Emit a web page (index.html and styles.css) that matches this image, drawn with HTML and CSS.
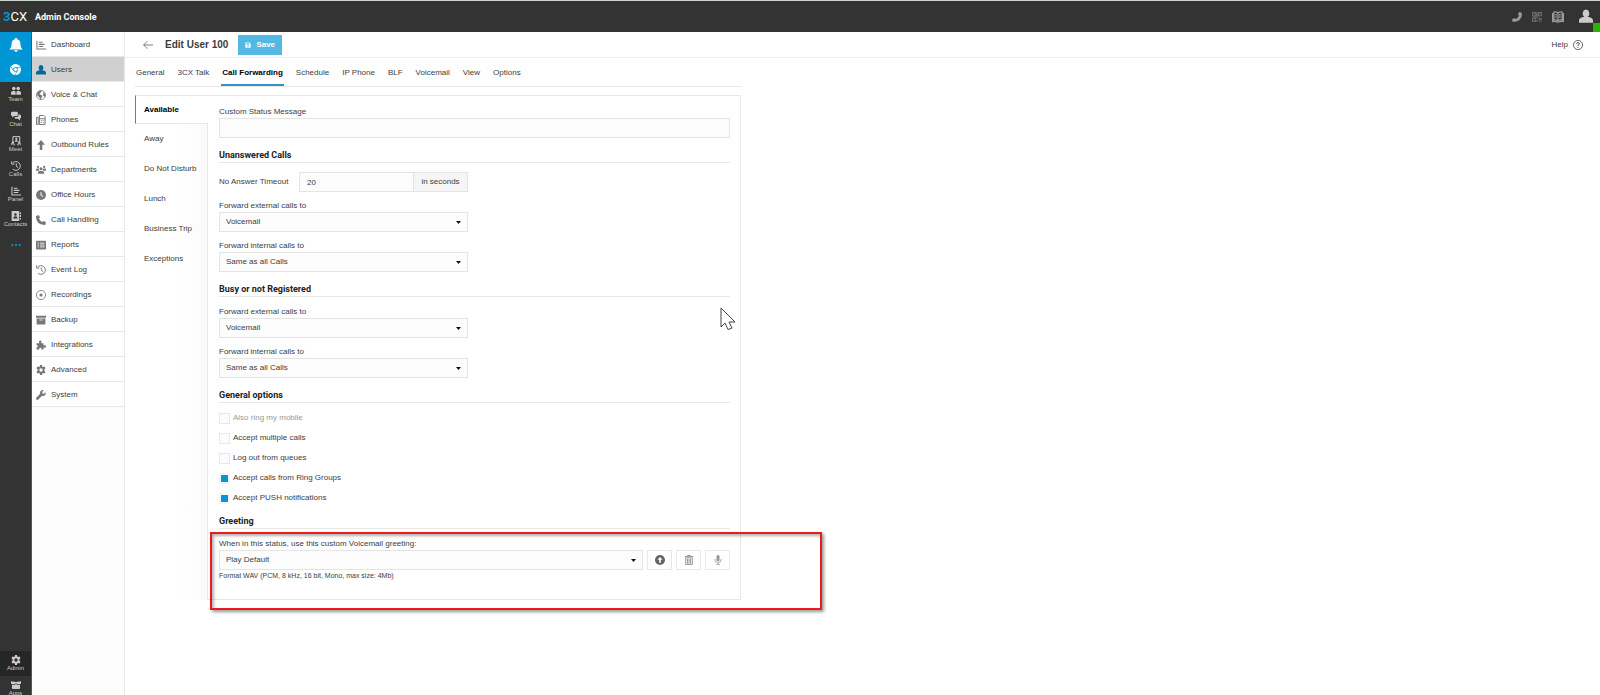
FILE: index.html
```html
<!DOCTYPE html>
<html lang="en">

<head>
    <meta charset="UTF-8">
    <meta name="viewport" content="width=device-width, initial-scale=1.0">
    <title>3CX Admin Console</title>
    <link rel="stylesheet" href="styles.css">
</head>

<body>
    <svg class="sprite" aria-hidden="true">
        <symbol id="i-chart" viewBox="0 0 16 16"><path d="M1.5 1v13.500H16M4.500 3.500h6M4.500 7h9M4.500 10.500h7" fill="none" stroke="currentColor" stroke-width="1.700"/></symbol>
        <symbol id="i-user" viewBox="0 0 16 16"><path d="M8 0a4 4.500 0 0 1 2 8.300c3 .7 6 1.500 6 4.200V15H0v-2.500c0-2.700 3-3.500 6-4.200A4 4.500 0 0 1 8 0z"/></symbol>
        <symbol id="i-globe" viewBox="0 0 16 16"><circle cx="8" cy="8" r="7.300" fill="none" stroke="currentColor" stroke-width="1.300"/><path d="M2 4l4-3 3 1-1 2-2 1v2l3 1 1 2-2 4-1 1-2-4-3-2zM11 3l3 2 1 4-2 2-2-3 1-2z"/></symbol>
        <symbol id="i-fax" viewBox="0 0 16 16"><path d="M.7 3.700h2.800v11.600H.7zM5.500 15.300V.7h7l2 2v12.600zM5.500 6h9M7.700 9h1.500M10.800 9h1.500M7.700 12h1.500M10.800 12h1.500" fill="none" stroke="currentColor" stroke-width="1.600"/></symbol>
        <symbol id="i-up" viewBox="0 0 16 16"><path d="M8 0l6.500 7.500H10V16H6V7.500H1.500z"/></symbol>
        <symbol id="i-group" viewBox="0 0 16 16"><circle cx="3" cy="3" r="1.800"/><circle cx="13" cy="3" r="1.800"/><circle cx="8" cy="6" r="2.400"/><path d="M0 9V7.500Q0 5.700 2 5.700h2.500L5 9zM16 9V7.500q0-1.800-2-1.800h-2.500L11 9zM3 14v-2q0-2.500 2.500-2.500h5Q13 9.500 13 12v2z"/></symbol>
        <symbol id="i-clock" viewBox="0 0 16 16"><circle cx="8" cy="8" r="8"/><path d="M8 3.500V8.500l3.500 2" fill="none" stroke="#fff" stroke-width="1.600"/></symbol>
        <symbol id="i-phone" viewBox="0 0 16 16"><path d="M1 1l3.500-1L6.500 4 4.700 5.700q1.700 4 5.600 5.600L12 9.500l4 2-1 3.500q-.3 1-1.500 1Q0 15 0 2.500 0 1.300 1 1z"/></symbol>
        <symbol id="i-list" viewBox="0 0 16 16"><rect y="1" width="16" height="14" rx="1.500"/><path d="M2.500 5h2M6.500 5h7M2.500 8h2M6.500 8h7M2.500 11h2M6.500 11h7" stroke="#fff" stroke-width="1.300"/></symbol>
        <symbol id="i-history" viewBox="0 0 16 16"><path d="M2.500 3.500A7 7 0 1 1 3 13M1 .5v4.500h4.500M8.500 4v4.500l3 2" fill="none" stroke="currentColor" stroke-width="1.500"/></symbol>
        <symbol id="i-record" viewBox="0 0 16 16"><circle cx="8" cy="8" r="7.300" fill="none" stroke="currentColor" stroke-width="1.300"/><circle cx="8" cy="8" r="2.500"/></symbol>
        <symbol id="i-box" viewBox="0 0 16 16"><path d="M0 1h16v3.500H0zM1 5.500h14V15H1z"/><path d="M5.500 8h5" stroke="#fff" stroke-width="1.300"/></symbol>
        <symbol id="i-puzzle" viewBox="0 0 16 16"><path d="M1 5h4.500Q4 3 5.200 1.500q1.500-1.300 3.200 0Q9.500 3 8 5h4v4q2-1.500 3.500-.3 1 1.600 0 3.200Q14 13 12 11.500V15H8.500q1-2.500-1.500-2.800Q4.500 12.500 5.500 15H1v-4q2 1 2.300-1Q3 8 1 9z"/></symbol>
        <symbol id="i-gear" viewBox="0 0 16 16"><path d="M6.500 0h3l.5 2.300 1.500.8 2.200-.8 1.500 2.700L13.500 6.700v2.600l1.700 1.700-1.500 2.700-2.200-.8-1.500.8-.5 2.300h-3L6 13.700l-1.500-.8-2.200.8L.8 11l1.700-1.700V6.700L.8 5l1.500-2.700 2.200.8L6 2.300zM8 5.300a2.700 2.700 0 1 0 0 5.400 2.700 2.700 0 0 0 0-5.400z" fill-rule="evenodd"/></symbol>
        <symbol id="i-wrench" viewBox="0 0 16 16"><path d="M15.500 3.500L13 6l-2.500-.5L10 3l2.500-2.500Q9.500-.5 7.500 1.700 6 3.500 6.700 6L.7 12q-1.200 1.500 0 3t3 .2L9.800 9.300q2.700.7 4.500-1 2-2 1.200-4.800z"/></symbol>
        <symbol id="i-bell" viewBox="0 0 16 16"><path d="M7 0h2v1.500q4 .7 4 5 0 4.500 2.500 6.500H.5Q3 11 3 6.500q0-4.300 4-5zM6 14h4q-.3 2-2 2t-2-2z"/></symbol>
        <symbol id="i-chrome" viewBox="0 0 16 16"><circle cx="8" cy="8" r="8"/><path d="M1.500 4L5 10M15 5.200H8M10.500 10L7.500 15.500" stroke="#0096d6" stroke-width="1"/><circle cx="8" cy="8" r="3" stroke="#0096d6" stroke-width="1.300"/></symbol>
        <symbol id="i-team" viewBox="0 0 16 16"><circle cx="4.500" cy="4" r="2.800"/><circle cx="11.500" cy="4" r="2.800"/><path d="M0 14v-3q0-3 3-3h3q1.500 0 1.500 3v3zM8.500 14v-3q0-3 1.500-3h3q3 0 3 3v3z"/></symbol>
        <symbol id="i-chat" viewBox="0 0 16 16"><path d="M2 1h7q2 0 2 2v3q0 2-2 2H5l-3 2.500V8Q0 8 0 6V3q0-2 2-2z"/><path d="M12.300 5q3.700 0 3.700 2.500v2q0 2-1.500 2.500v3L11 12.500H8Q6 12.500 5.500 9.500h4q2.800-.5 2.800-4.500z"/></symbol>
        <symbol id="i-meet" viewBox="0 0 16 16"><path d="M3 10V1h11v9M0 15v-2.500h5V15M11 15v-2.500h5V15" fill="none" stroke="currentColor" stroke-width="1.600"/><circle cx="3" cy="10" r="1.800"/><circle cx="13" cy="10" r="1.800"/><circle cx="8.500" cy="4.500" r="1.800"/><path d="M6 9q0-2.500 2.500-2.500T11 9z"/></symbol>
        <symbol id="i-contacts" viewBox="0 0 16 16"><path d="M1 0h12v16H1zM14 2h2v3h-2zM14 6.500h2v3h-2zM14 11h2v3h-2z"/><circle cx="7" cy="5.500" r="2" fill="#333"/><path d="M3.500 12q0-3.500 3.500-3.500t3.500 3.500z" fill="#333"/></symbol>
        <symbol id="i-dots" viewBox="0 0 16 16"><circle cx="2" cy="8" r="1.800"/><circle cx="8" cy="8" r="1.800"/><circle cx="14" cy="8" r="1.800"/></symbol>
        <symbol id="i-apps" viewBox="0 0 16 16"><path d="M0 2l8 1 8-1v4l-5 1-3-2-3 2-5-1z"/><path d="M1.500 7.500L5 8.500l3-2 3 2 3.500-1V13Q14 14.500 12 14.500H4Q2 14.500 1.500 13z"/></symbol>
        <symbol id="i-qr" viewBox="0 0 16 16"><path d="M1 1h5v5H1zM10 1h5v5h-5zM1 10h5v5H1zM9 9.500h3V12h3V9M9 12.500v3M12 15h3M3 3.500h1M12 3.500h1M3 12.500h1M8 1v7H1" fill="none" stroke="currentColor" stroke-width="1.800"/></symbol>
        <symbol id="i-book" viewBox="0 0 16 16"><path d="M8 2.500Q5 .5 2.500 1.500V12q3-.7 5.500 1 2.500-1.700 5.500-1V1.500Q11 .5 8 2.500V13M2 3.500H.8V14q4-.5 7.200 1 3.200-1.500 7.200-1V3.500H14M4.500 5h2M4.500 8h2M9.500 5h2M9.500 8h2" fill="none" stroke="currentColor" stroke-width="1.700"/></symbol>
        <symbol id="i-help" viewBox="0 0 16 16"><circle cx="8" cy="8" r="7.300" fill="none" stroke="currentColor" stroke-width="1.200"/><path d="M5.700 6.200Q5.800 4.200 8 4.200t2.300 1.900Q10.200 7.300 8 8.400V9.700M8 11v1.500" fill="none" stroke="currentColor" stroke-width="1.400"/></symbol>
        <symbol id="i-back" viewBox="0 0 16 16"><path d="M16 8H1M7 2L1 8l6 6" fill="none" stroke="currentColor" stroke-width="1.200"/></symbol>
        <symbol id="i-save" viewBox="0 0 16 16"><path d="M1 1h11l3 3v11H1zM4 3v4h7V3zM8 9a2 2 0 1 0 0 4 2 2 0 0 0 0-4z" fill-rule="evenodd"/></symbol>
        <symbol id="i-upload" viewBox="0 0 16 16"><circle cx="8" cy="8" r="8"/><path d="M8 3l4 4.500H9.300V12.500H6.700V7.500H4z" fill="#fff"/></symbol>
        <symbol id="i-trash" viewBox="0 0 16 16"><path d="M1 2.500h14M5.500 2V.7h5V2M2.700 4.500h10.600v10.800H2.700zM5.500 6v8M8 6v8M10.500 6v8" fill="none" stroke="currentColor" stroke-width="1.600"/></symbol>
        <symbol id="i-mic" viewBox="0 0 16 16"><rect x="5.500" width="5" height="10" rx="2.500"/><path d="M3 6.500v1.500q0 4 5 4t5-4V6.500M8 12v3.300M5 15.300h6" fill="none" stroke="currentColor" stroke-width="1.300"/></symbol>
        <symbol id="i-caret" viewBox="0 0 10 6"><path d="M0 0h10L5 6z"/></symbol>
    </svg>

    <header class="topbar">
        <div class="logo"><span class="logo-blue">3</span>CX</div>
        <div class="product">Admin Console</div>
        <div class="top-icons">
            <button class="top-btn" aria-label="Dialer"><svg class="icon flip"><use href="#i-phone"/></svg></button>
            <button class="top-btn" aria-label="QR code"><svg class="icon dim"><use href="#i-qr"/></svg></button>
            <button class="top-btn" aria-label="Phonebook"><svg class="icon book"><use href="#i-book"/></svg></button>
            <button class="top-btn avatar" aria-label="Account"><svg class="icon"><use href="#i-user"/></svg><span class="presence"></span></button>
        </div>
    </header>

    <div class="layout">
        <nav class="rail" aria-label="Apps">
            <a href="#" class="rail-item blue" aria-label="Notifications"><svg class="icon"><use href="#i-bell"/></svg></a>
            <a href="#" class="rail-item blue" aria-label="Chrome extension"><svg class="icon chrome"><use href="#i-chrome"/></svg></a>
            <a href="#" class="rail-item"><svg class="icon"><use href="#i-team"/></svg>Team</a>
            <a href="#" class="rail-item"><svg class="icon"><use href="#i-chat"/></svg>Chat</a>
            <a href="#" class="rail-item"><svg class="icon"><use href="#i-meet"/></svg>Meet</a>
            <a href="#" class="rail-item"><svg class="icon"><use href="#i-history"/></svg>Calls</a>
            <a href="#" class="rail-item"><svg class="icon"><use href="#i-chart"/></svg>Panel</a>
            <a href="#" class="rail-item"><svg class="icon"><use href="#i-contacts"/></svg>Contacts</a>
            <a href="#" class="rail-item more" aria-label="More"><svg class="icon"><use href="#i-dots"/></svg></a>
            <div class="rail-bottom">
                <a href="#" class="rail-item current"><svg class="icon"><use href="#i-gear"/></svg>Admin</a>
                <a href="#" class="rail-item"><svg class="icon"><use href="#i-apps"/></svg>Apps</a>
            </div>
        </nav>

        <nav class="menu" aria-label="Admin">
            <a href="#" class="menu-item"><svg class="icon"><use href="#i-chart"/></svg>Dashboard</a>
            <a href="#" class="menu-item active"><svg class="icon"><use href="#i-user"/></svg>Users</a>
            <a href="#" class="menu-item"><svg class="icon"><use href="#i-globe"/></svg>Voice &amp; Chat</a>
            <a href="#" class="menu-item"><svg class="icon"><use href="#i-fax"/></svg>Phones</a>
            <a href="#" class="menu-item"><svg class="icon"><use href="#i-up"/></svg>Outbound Rules</a>
            <a href="#" class="menu-item"><svg class="icon"><use href="#i-group"/></svg>Departments</a>
            <a href="#" class="menu-item"><svg class="icon"><use href="#i-clock"/></svg>Office Hours</a>
            <a href="#" class="menu-item"><svg class="icon"><use href="#i-phone"/></svg>Call Handling</a>
            <a href="#" class="menu-item"><svg class="icon"><use href="#i-list"/></svg>Reports</a>
            <a href="#" class="menu-item"><svg class="icon"><use href="#i-history"/></svg>Event Log</a>
            <a href="#" class="menu-item"><svg class="icon"><use href="#i-record"/></svg>Recordings</a>
            <a href="#" class="menu-item"><svg class="icon"><use href="#i-box"/></svg>Backup</a>
            <a href="#" class="menu-item"><svg class="icon"><use href="#i-puzzle"/></svg>Integrations</a>
            <a href="#" class="menu-item"><svg class="icon"><use href="#i-gear"/></svg>Advanced</a>
            <a href="#" class="menu-item"><svg class="icon"><use href="#i-wrench"/></svg>System</a>
        </nav>

        <main class="main">
            <div class="page-header">
                <a href="#" class="back" aria-label="Back"><svg class="icon"><use href="#i-back"/></svg></a>
                <h1 class="page-title">Edit User 100</h1>
                <button class="save-btn"><svg class="icon"><use href="#i-save"/></svg>Save</button>
                <a href="#" class="help">Help <svg class="icon"><use href="#i-help"/></svg></a>
            </div>

            <div class="columns">
                <div class="user-form">
                    <nav class="tabs" aria-label="User settings">
                        <a href="#" class="tab">General</a>
                        <a href="#" class="tab">3CX Talk</a>
                        <a href="#" class="tab active">Call Forwarding</a>
                        <a href="#" class="tab">Schedule</a>
                        <a href="#" class="tab">IP Phone</a>
                        <a href="#" class="tab">BLF</a>
                        <a href="#" class="tab">Voicemail</a>
                        <a href="#" class="tab">View</a>
                        <a href="#" class="tab">Options</a>
                    </nav>

                    <div class="panel">
                        <nav class="status-tabs" aria-label="Status">
                            <a href="#" class="status-tab active">Available</a>
                            <div class="status-rest">
                                <a href="#" class="status-tab">Away</a>
                                <a href="#" class="status-tab">Do Not Disturb</a>
                                <a href="#" class="status-tab">Lunch</a>
                                <a href="#" class="status-tab">Business Trip</a>
                                <a href="#" class="status-tab">Exceptions</a>
                            </div>
                        </nav>

                        <form class="settings">
                            <div class="field">
                                <label for="statusMsg">Custom Status Message</label>
                                <input type="text" id="statusMsg" class="text-input">
                            </div>

                            <h2 class="section-title">Unanswered Calls</h2>
                            <div class="half">
                                <div class="timeout">
                                    <label for="timeout">No Answer Timeout</label>
                                    <input type="text" id="timeout" class="text-input" value="20">
                                    <span class="addon">in seconds</span>
                                </div>
                                <div class="field">
                                    <label for="unExt">Forward external calls to</label>
                                    <div class="select"><select id="unExt"><option>Voicemail</option></select><svg class="caret"><use href="#i-caret"/></svg></div>
                                </div>
                                <div class="field">
                                    <label for="unInt">Forward internal calls to</label>
                                    <div class="select"><select id="unInt"><option>Same as all Calls</option></select><svg class="caret"><use href="#i-caret"/></svg></div>
                                </div>
                            </div>

                            <h2 class="section-title">Busy or not Registered</h2>
                            <div class="half">
                                <div class="field">
                                    <label for="busyExt">Forward external calls to</label>
                                    <div class="select"><select id="busyExt"><option>Voicemail</option></select><svg class="caret"><use href="#i-caret"/></svg></div>
                                </div>
                                <div class="field">
                                    <label for="busyInt">Forward internal calls to</label>
                                    <div class="select"><select id="busyInt"><option>Same as all Calls</option></select><svg class="caret"><use href="#i-caret"/></svg></div>
                                </div>
                            </div>

                            <h2 class="section-title">General options</h2>
                            <div class="options">
                                <label class="check disabled"><input type="checkbox" disabled>Also ring my mobile</label>
                                <label class="check"><input type="checkbox">Accept multiple calls</label>
                                <label class="check"><input type="checkbox">Log out from queues</label>
                                <label class="check"><input type="checkbox" checked>Accept calls from Ring Groups</label>
                                <label class="check"><input type="checkbox" checked>Accept PUSH notifications</label>
                            </div>

                            <h2 class="section-title">Greeting</h2>
                            <div class="greeting">
                                <label for="greeting">When in this status, use this custom Voicemail greeting:</label>
                                <div class="greeting-row">
                                    <div class="select"><select id="greeting"><option>Play Default</option></select><svg class="caret"><use href="#i-caret"/></svg></div>
                                    <button type="button" class="icon-btn" aria-label="Upload"><svg class="icon"><use href="#i-upload"/></svg></button>
                                    <button type="button" class="icon-btn" aria-label="Delete" disabled><svg class="icon"><use href="#i-trash"/></svg></button>
                                    <button type="button" class="icon-btn" aria-label="Record" disabled><svg class="icon"><use href="#i-mic"/></svg></button>
                                </div>
                                <p class="note">Format WAV (PCM, 8 kHz, 16 bit, Mono, max size: 4Mb)</p>
                                <div class="highlight"></div>
                            </div>
                        </form>

                        <svg class="cursor" viewBox="0 0 16 24"><path d="M1 1v19l4-4 3 6.500 4-1.500-3-6h6z" fill="#fff" stroke="#444" stroke-width="1"/></svg>
                    </div>
                </div>
            </div>
        </main>
    </div>
</body>

</html>
```
FILE: styles.css
```css
* {
    box-sizing: border-box;
}

body {
    margin: 0;
    height: 100vh;
    display: flex;
    flex-direction: column;
    overflow: hidden;
    font-family: "Liberation Sans", Arial, sans-serif;
    font-size: 8px;
    line-height: 12px;
    color: #3c3c3c;
    background: #fff;
}

a {
    color: inherit;
    text-decoration: none;
}

button,
input,
select {
    font: inherit;
    color: inherit;
    margin: 0;
}

button {
    padding: 0;
    border: none;
    background: none;
    cursor: pointer;
}

.sprite {
    display: none;
}

.icon {
    display: block;
    flex: none;
    width: 10px;
    height: 10px;
    fill: currentColor;
}

/* Top bar */
.topbar {
    flex: none;
    display: flex;
    align-items: center;
    height: 32px;
    padding-left: 3px;
    background: #333;
    border-top: 1px solid #cdd5d0;
    color: #fff;
}

.logo {
    width: 32px;
    font-family: Roboto, sans-serif;
    font-size: 13px;
}

.logo-blue {
    color: #0096d6;
    font-weight: bold;
}

.product {
    font-family: Roboto, sans-serif;
    font-size: 9px;
    font-weight: bold;
}

.top-icons {
    display: flex;
    align-items: center;
    gap: 10px;
    height: 100%;
    margin-left: auto;
    color: #999;
}

.top-btn {
    color: inherit;
}

.flip {
    transform: scaleX(-1);
}

.dim {
    color: #6c6c6c;
}

.book {
    width: 12px;
    height: 12px;
}

.avatar {
    position: relative;
    height: 100%;
    padding: 0 7px 0 5px;
    color: #ccc;
}

.avatar .icon {
    width: 14px;
    height: 17px;
}

.presence {
    position: absolute;
    right: 0;
    bottom: 0;
    width: 7px;
    height: 9px;
    background: #2db400;
}

.layout {
    flex: 1;
    min-height: 0;
    display: flex;
}

/* App rail */
.rail {
    flex: none;
    width: 32px;
    display: flex;
    flex-direction: column;
    background: #333;
    border-right: 1px solid #555;
    color: #ccc;
}

.rail-item {
    flex: none;
    height: 25px;
    display: flex;
    flex-direction: column;
    align-items: center;
    justify-content: center;
    font-size: 6px;
    line-height: 7px;
}

.rail-item.blue {
    background: #0096d6;
    color: #fff;
}

.rail-item.blue .icon {
    width: 14px;
    height: 14px;
}

.rail-item.blue .chrome {
    width: 11px;
    height: 11px;
}

.rail-item.more {
    color: #0096d6;
}

.rail-item.current {
    background: #262626;
}

.rail-bottom {
    margin-top: auto;
    margin-bottom: -6px;
}

/* Admin menu */
.menu {
    flex: none;
    width: 93px;
    background: #fcfcfc;
    border-right: 1px solid #e8e8e8;
}

.menu-item {
    display: flex;
    align-items: center;
    gap: 5px;
    height: 25px;
    padding: 2px 0 0 4px;
    background: #fff;
    border-bottom: 1px solid #e8e8e8;
}

.menu-item .icon {
    color: #777;
}

.menu-item.active {
    background: #d0d0d0;
}

.menu-item.active .icon {
    color: #006a9e;
}

/* Page header */
.main {
    flex: 1;
    min-width: 0;
}

.page-header {
    display: flex;
    align-items: center;
    height: 26px;
    padding: 0 17px 0 18px;
    border-bottom: 1px solid #eee;
}

.back {
    color: #555;
}

.page-title {
    margin: 0 10px 0 12px;
    font-size: 10px;
    font-weight: bold;
}

.save-btn {
    display: flex;
    align-items: center;
    gap: 5px;
    height: 20px;
    padding: 0 7px;
    background: #53b9e2;
    color: #fff;
    font-weight: bold;
}

.save-btn .icon {
    width: 6px;
    height: 6px;
}

.help {
    display: flex;
    align-items: center;
    gap: 5px;
    margin-left: auto;
}

.columns {
    display: grid;
    grid-template-columns: 5fr 7fr;
    padding: 0 10px;
}

/* Tabs */
.tabs {
    display: flex;
    gap: 11px;
    border-bottom: 1px solid #e8e8e8;
}

.tab {
    padding: 9px 1px 5px;
}

.tab.active {
    font-weight: bold;
    color: #000;
    border-bottom: 2px solid #3390c8;
}

/* Status panel */
.panel {
    position: relative;
    display: flex;
    margin-top: 8px;
}

.status-tabs {
    flex: none;
    width: 73px;
    display: flex;
    flex-direction: column;
}

.status-tab {
    display: flex;
    align-items: center;
    height: 29px;
    padding-left: 9px;
}

.status-tab.active {
    border-top: 1px solid #e8e8e8;
    border-bottom: 1px solid #e8e8e8;
    border-left: 1px solid #3390c8;
    padding-left: 8px;
    font-weight: bold;
    color: #000;
}

.status-rest {
    flex: 1;
    display: flex;
    flex-direction: column;
    gap: 1px;
    background: linear-gradient(to right, #fff 60%, #fafafa);
    border-right: 1px solid #e8e8e8;
}

.settings {
    flex: 1;
    min-width: 0;
    padding: 10px 10px 17px 11px;
    border: 1px solid #e8e8e8;
    border-left: none;
}

.field label,
.greeting label {
    display: block;
}

.text-input {
    display: block;
    width: 100%;
    height: 20px;
    padding: 0 7px;
    background: #fcfcfc;
    border: 1px solid #e4e4e4;
}

.section-title {
    margin: 11px 0 9px;
    padding-bottom: 1px;
    border-bottom: 1px solid #e8e8e8;
    font-family: Roboto, sans-serif;
    font-size: 9px;
    font-weight: bold;
    color: #222;
}

.half {
    width: calc(50% - 7px);
    display: flex;
    flex-direction: column;
    gap: 8px;
}

.timeout {
    display: flex;
    align-items: center;
}

.timeout label {
    flex: none;
    width: 80px;
}

.timeout .text-input {
    flex: 1;
    min-width: 0;
}

.addon {
    height: 20px;
    padding: 3px 7px;
    background: #f5f5f5;
    border: 1px solid #e4e4e4;
    border-left: none;
}

.select {
    flex: 1;
    display: grid;
    align-items: center;
}

.select select {
    grid-area: 1 / 1;
    appearance: none;
    width: 100%;
    height: 20px;
    padding: 0 6px;
    background: #fcfcfc;
    border: 1px solid #e4e4e4;
    border-radius: 0;
}

.caret {
    grid-area: 1 / 1;
    justify-self: end;
    width: 5px;
    height: 3px;
    margin-right: 7px;
    fill: #111;
    pointer-events: none;
}

.options {
    display: flex;
    flex-direction: column;
    gap: 8px;
}

.check {
    display: flex;
    align-items: center;
    gap: 3px;
}

.check input {
    appearance: none;
    width: 11px;
    height: 11px;
    background: #fcfcfc;
    border: 1px solid #e8e8e8;
}

.check input:checked {
    border: 2px solid #fafafa;
    background: #0096d6;
    background-clip: padding-box;
    outline: 1px solid #f4f4f4;
    outline-offset: -1px;
}

.check.disabled {
    color: #999;
}

.greeting {
    position: relative;
}

.greeting-row {
    display: flex;
    gap: 4px;
}

.icon-btn {
    display: flex;
    align-items: center;
    justify-content: center;
    width: 25px;
    height: 20px;
    border: 1px solid #e8e8e8;
    color: #666;
}

.icon-btn:disabled {
    color: #999;
}

.note {
    margin: 0;
    font-size: 7px;
}

/* Callout box drawn over the greeting settings */
.highlight {
    position: absolute;
    top: -6px;
    right: -92px;
    bottom: -28px;
    left: -9px;
    border: 2px solid #f01818;
    box-shadow: 2px 2px 3px rgba(0, 0, 0, 0.4), inset 2px 2px 3px rgba(0, 0, 0, 0.3);
    pointer-events: none;
}

.cursor {
    position: absolute;
    top: 212px;
    right: 5px;
    width: 16px;
    height: 24px;
}
```
